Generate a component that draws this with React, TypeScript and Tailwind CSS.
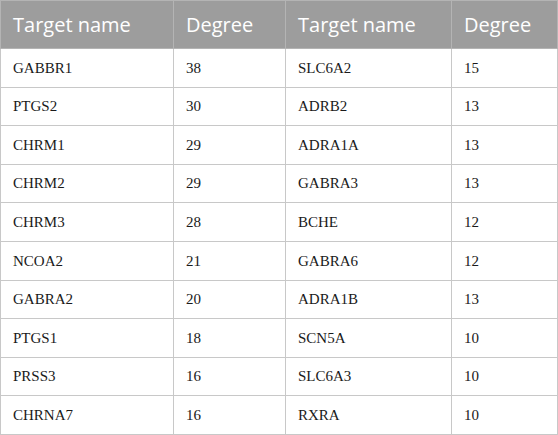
import React from 'react';

const rows: [string, string, string, string][] = [
  ['GABBR1', '38', 'SLC6A2', '15'],
  ['PTGS2', '30', 'ADRB2', '13'],
  ['CHRM1', '29', 'ADRA1A', '13'],
  ['CHRM2', '29', 'GABRA3', '13'],
  ['CHRM3', '28', 'BCHE', '12'],
  ['NCOA2', '21', 'GABRA6', '12'],
  ['GABRA2', '20', 'ADRA1B', '13'],
  ['PTGS1', '18', 'SCN5A', '10'],
  ['PRSS3', '16', 'SLC6A3', '10'],
  ['CHRNA7', '16', 'RXRA', '10'],
];

const headers = ['Target name', 'Degree', 'Target name', 'Degree'];

export default function App() {
  return (
    <div className="w-[558px] h-[435px] bg-white">
      <table className="w-[557px] border-collapse table-fixed border border-[#c8c8c8]">
        <colgroup>
          <col className="w-[173px]" />
          <col className="w-[112px]" />
          <col className="w-[166px]" />
          <col className="w-[106px]" />
        </colgroup>
        <thead className="font-['Open_Sans',sans-serif]">
          <tr className="h-[48px] bg-[#9d9d9d]">
            {headers.map((h, i) => (
              <th
                key={i}
                className="px-3 text-left font-normal text-white text-[20px] border border-[#b4b4b4]"
              >
                {h}
              </th>
            ))}
          </tr>
        </thead>
        <tbody className="font-['Liberation_Serif',serif]">
          {rows.map((r, i) => (
            <tr key={i} className="h-[38.6px]">
              {r.map((c, j) => (
                <td
                  key={j}
                  className="px-3 text-[15px] text-[#1a1a1a] border border-[#c8c8c8]"
                >
                  {c}
                </td>
              ))}
            </tr>
          ))}
        </tbody>
      </table>
    </div>
  );
}
